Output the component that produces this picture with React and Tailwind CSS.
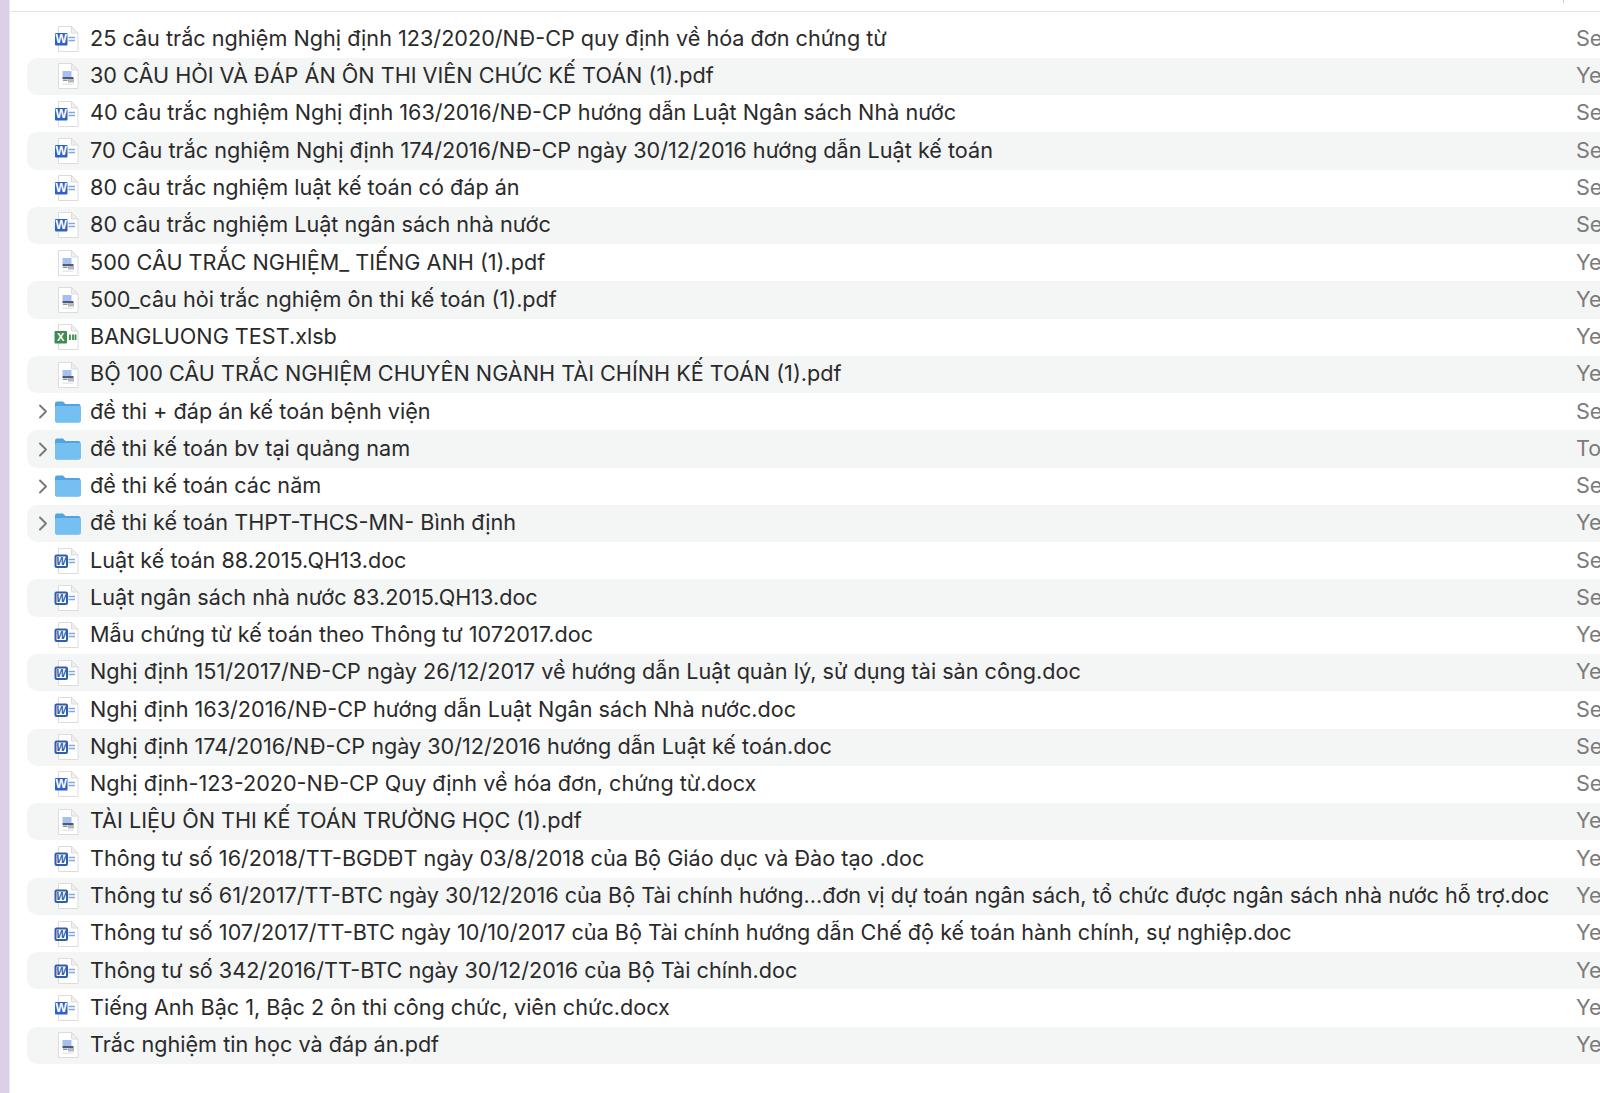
import React from 'react';

const rows = [
  ['word', '25 câu trắc nghiệm Nghị định 123/2020/NĐ-CP quy định về hóa đơn chứng từ', 'Se'],
  ['pdf', '30 CÂU HỎI VÀ ĐÁP ÁN ÔN THI VIÊN CHỨC KẾ TOÁN (1).pdf', 'Ye'],
  ['word', '40 câu trắc nghiệm Nghị định 163/2016/NĐ-CP hướng dẫn Luật Ngân sách Nhà nước', 'Se'],
  ['word', '70 Câu trắc nghiệm Nghị định 174/2016/NĐ-CP ngày 30/12/2016 hướng dẫn Luật kế toán', 'Se'],
  ['word', '80 câu trắc nghiệm luật kế toán có đáp án', 'Se'],
  ['word', '80 câu trắc nghiệm Luật ngân sách nhà nước', 'Se'],
  ['pdf', '500 CÂU TRẮC NGHIỆM_ TIẾNG ANH (1).pdf', 'Ye'],
  ['pdf', '500_câu hỏi trắc nghiệm ôn thi kế toán (1).pdf', 'Ye'],
  ['excel', 'BANGLUONG TEST.xlsb', 'Ye'],
  ['pdf', 'BỘ 100 CÂU TRẮC NGHIỆM CHUYÊN NGÀNH TÀI CHÍNH KẾ TOÁN (1).pdf', 'Ye'],
  ['folder', 'đề thi + đáp án kế toán bệnh viện', 'Se'],
  ['folder', 'đề thi kế toán bv tại quảng nam', 'To'],
  ['folder', 'đề thi kế toán các năm', 'Se'],
  ['folder', 'đề thi kế toán THPT-THCS-MN- Bình định', 'Ye'],
  ['doc', 'Luật kế toán 88.2015.QH13.doc', 'Se'],
  ['doc', 'Luật ngân sách nhà nước 83.2015.QH13.doc', 'Se'],
  ['doc', 'Mẫu chứng từ kế toán theo Thông tư 1072017.doc', 'Ye'],
  ['doc', 'Nghị định 151/2017/NĐ-CP ngày 26/12/2017 về hướng dẫn Luật quản lý, sử dụng tài sản công.doc', 'Ye'],
  ['doc', 'Nghị định 163/2016/NĐ-CP hướng dẫn Luật Ngân sách Nhà nước.doc', 'Se'],
  ['doc', 'Nghị định 174/2016/NĐ-CP ngày 30/12/2016 hướng dẫn Luật kế toán.doc', 'Se'],
  ['word', 'Nghị định-123-2020-NĐ-CP Quy định về hóa đơn, chứng từ.docx', 'Se'],
  ['pdf', 'TÀI LIỆU ÔN THI KẾ TOÁN TRƯỜNG HỌC (1).pdf', 'Ye'],
  ['doc', 'Thông tư số 16/2018/TT-BGDĐT ngày 03/8/2018 của Bộ Giáo dục và Đào tạo .doc', 'Ye'],
  ['doc', 'Thông tư số 61/2017/TT-BTC ngày 30/12/2016 của Bộ Tài chính hướng...đơn vị dự toán ngân sách, tổ chức được ngân sách nhà nước hỗ trợ.doc', 'Ye'],
  ['doc', 'Thông tư số 107/2017/TT-BTC ngày 10/10/2017 của Bộ Tài chính hướng dẫn Chế độ kế toán hành chính, sự nghiệp.doc', 'Ye'],
  ['doc', 'Thông tư số 342/2016/TT-BTC ngày 30/12/2016 của Bộ Tài chính.doc', 'Ye'],
  ['word', 'Tiếng Anh Bậc 1, Bậc 2 ôn thi công chức, viên chức.docx', 'Ye'],
  ['pdf', 'Trắc nghiệm tin học và đáp án.pdf', 'Ye'],
];

const Page = () => (
  <>
    <path d="M6.5 1.5h13l6.5 6.5v18.5h-19.5z" fill="#fff" stroke="#dcdcdc" />
    <path d="M19.5 1.5v6.5h6.5z" fill="#efefef" stroke="#dcdcdc" />
  </>
);

const FileIcon = ({ type }) => {
  if (type === 'folder') {
    return (
      <svg width="30" height="28" viewBox="0 0 30 28">
        <path d="M3 5.5a2 2 0 0 1 2-2h6l2.5 2.5h13a2 2 0 0 1 2 2v14.5a2 2 0 0 1-2 2H5a2 2 0 0 1-2-2z" fill="#4fa5e2" />
        <path d="M3 9.5a1.5 1.5 0 0 1 1.5-1.5h23a1.5 1.5 0 0 1 1.5 1.5v13a2 2 0 0 1-2 2H5a2 2 0 0 1-2-2z" fill="#76bff1" />
      </svg>
    );
  }
  if (type === 'pdf') {
    return (
      <svg width="28" height="28" viewBox="0 0 28 28">
        <Page />
        <rect x="10.5" y="9" width="9" height="6" fill="#a5c0ee" />
        <rect x="10.5" y="15" width="11" height="2" fill="#4d5a78" />
        <rect x="16" y="17" width="6" height="3.5" fill="#b4b8be" />
        <rect x="11" y="17.5" width="4.5" height="1.5" fill="#8d939c" />
        <rect x="10.5" y="21.5" width="11" height="1.5" fill="#e6e8eb" />
      </svg>
    );
  }
  if (type === 'excel') {
    return (
      <svg width="28" height="28" viewBox="0 0 28 28">
        <Page />
        <rect x="2.5" y="8" width="12.5" height="12.5" rx="1" fill="#3f8a4f" />
        <text x="8.75" y="18.2" textAnchor="middle" fontSize="11" fontWeight="700" fontFamily="Liberation Sans" fill="#fff">X</text>
        <path d="M18 11.5v5.5M21 11.5v5.5M23.5 11.5v5.5" stroke="#3f8a4f" strokeWidth="1.8" />
      </svg>
    );
  }
  const old = type === 'doc';
  return (
    <svg width="28" height="28" viewBox="0 0 28 28">
      <Page />
      <rect x={old ? 3.5 : 3} y={old ? 8.5 : 8} width={old ? 11.5 : 12.5} height={old ? 11.5 : 12.5} rx="1" fill={old ? '#fff' : '#2f62c4'} stroke={old ? '#2f5fa8' : 'none'} strokeWidth={old ? 2 : 0} />
      <text x="9.25" y="18" textAnchor="middle" fontSize={old ? 10.5 : 12} fontWeight="700" fontStyle={old ? 'italic' : 'normal'} fontFamily="Liberation Sans" fill={old ? '#2f5fa8' : '#fff'}>W</text>
      <path d="M16.5 12.5h6.5M16.5 15.5h6.5" stroke="#7fa9e2" strokeWidth="1.5" />
    </svg>
  );
};

export default function App() {
  return (
    <div className="flex h-screen w-full overflow-hidden bg-white font-['Inter',sans-serif] text-[21.64px] text-[#2a2a2a]">
      <div className="w-[10px] shrink-0 border-r border-[#e9e9ec] bg-[#dccfe8]" />
      <div className="min-w-0 flex-1">
        <div className="relative h-[12px] border-b border-[#e2e2e2]">
          <span className="absolute left-[1553px] top-0 h-[3px] w-px bg-[#c8c8c8]" />
        </div>
        <div className="ml-[17px] pt-[8.5px]">
          {rows.map(([type, name, date], i) => (
            <div key={name} className={`flex h-[37.28px] items-center rounded-l-[10px] ${i % 2 === 1 ? 'bg-[#f4f5f5]' : ''}`}>
              <div className="flex w-[25px] shrink-0 justify-end pr-[4px]">
                {type === 'folder' && (
                  <svg width="10" height="15" viewBox="0 0 10 15" fill="none" stroke="#787878" strokeWidth="1.9" strokeLinecap="round" strokeLinejoin="round">
                    <path d="M2 1.5l6 6-6 6" />
                  </svg>
                )}
              </div>
              <div className="w-[38px] shrink-0">
                <FileIcon type={type} />
              </div>
              <div className="min-w-0 flex-1 whitespace-nowrap pb-[2px]">{name}</div>
              <div className="w-[24px] shrink-0 overflow-hidden pb-[2px] text-[#7b7b7b]">{date}</div>
            </div>
          ))}
        </div>
      </div>
    </div>
  );
}
